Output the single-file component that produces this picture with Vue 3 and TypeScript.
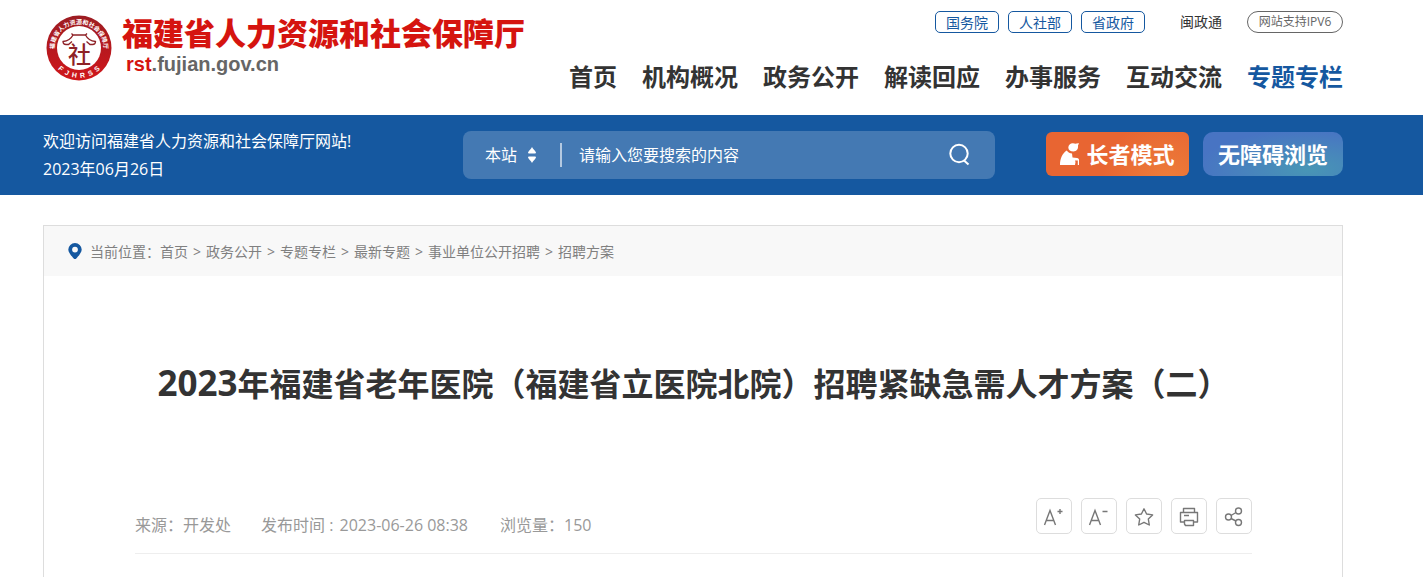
<script setup lang="ts">
import { ref } from 'vue'

const portals: string[] = ['国务院', '人社部', '省政府']
const nav: string[] = ['首页', '机构概况', '政务公开', '解读回应', '办事服务', '互动交流', '专题专栏']
const activeNav = '专题专栏'
const crumbs: string[] = ['首页', '政务公开', '专题专栏', '最新专题', '事业单位公开招聘', '招聘方案']
const scope = ref('本站')
const keyword = ref('')
</script>

<template>
  <div class="page">
    <header class="wrap header">
      <a class="brand" href="#">
        <svg class="emblem" viewBox="0 0 66 66" aria-hidden="true">
          <defs>
            <linearGradient id="ring" x1="0" y1="0" x2="0" y2="1">
              <stop offset="0" stop-color="#9c1c22" />
              <stop offset="1" stop-color="#d0161b" />
            </linearGradient>
            <path id="arc-top" d="M11.500 45.500A24.600 24.600 0 1 1 54.500 45.500" />
            <path id="arc-bottom" d="M4 40A29.800 29.800 0 0 0 62 40" />
          </defs>
          <circle cx="33" cy="33" r="32.500" fill="url(#ring)" />
          <circle cx="33" cy="33" r="22" fill="#fff" />
          <text class="ring-cn"><textPath href="#arc-top" startOffset="50%" text-anchor="middle">福建省人力资源和社会保障厅</textPath></text>
          <text class="ring-en"><textPath href="#arc-bottom" startOffset="50%" text-anchor="middle">F&nbsp;&nbsp;J&nbsp;&nbsp;H&nbsp;&nbsp;R&nbsp;&nbsp;S&nbsp;&nbsp;S</textPath></text>
          <g fill="none" stroke="#8e2227" stroke-width="1.300">
            <path d="M25.500 18.500L27 20H39.500L41 18.500" />
            <path d="M27 20C25 24 22 26 17 26.500C17 28.500 18 29.500 20 29.500H22.500L26 26.500" />
            <path d="M39.500 20C41.500 24 44.500 26 49.500 26.500C49.500 28.500 48.500 29.500 46.500 29.500H44L40.500 26.500" />
          </g>
          <text class="emblem-mark" x="33.500" y="48" text-anchor="middle">社</text>
        </svg>
        <span class="brand-text">
          <span class="brand-name">福建省人力资源和社会保障厅</span>
          <span class="brand-url"><b>rst</b>.fujian.gov.cn</span>
        </span>
      </a>
      <div class="header-right">
        <div class="tools">
          <a v-for="p in portals" :key="p" class="portal" href="#">{{ p }}</a>
          <a class="mzt" href="#">闽政通</a>
          <a class="ipv6" href="#">网站支持IPV6</a>
        </div>
        <nav class="nav">
          <a v-for="n in nav" :key="n" href="#" :class="{ active: n === activeNav }">{{ n }}</a>
        </nav>
      </div>
    </header>

    <section class="band">
      <div class="wrap band-inner">
        <p class="welcome">欢迎访问福建省人力资源和社会保障厅网站!<br />2023年06月26日</p>
        <form class="search" @submit.prevent>
          <div class="scope">
            <select v-model="scope" aria-label="搜索范围">
              <option>本站</option>
            </select>
            <svg width="10" height="18" viewBox="0 0 10 18" fill="#fff" aria-hidden="true">
              <path d="M5 1C6 3 8 4.500 9 6.500Q9 7.500 8 7.500H2Q1 7.500 1 6.500C2 4.500 4 3 5 1ZM5 17C6 15 8 13.500 9 11.500Q9 10.500 8 10.500H2Q1 10.500 1 11.500C2 13.500 4 15 5 17Z" />
            </svg>
          </div>
          <input v-model="keyword" type="text" placeholder="请输入您要搜索的内容" aria-label="搜索内容" />
          <button type="submit" aria-label="搜索">
            <svg width="24" height="24" viewBox="0 0 24 24" fill="none" stroke="#fff" stroke-width="2" aria-hidden="true">
              <circle cx="12" cy="10.500" r="8.700" /><path d="M17 17.500L21.500 21.500" />
            </svg>
          </button>
        </form>
        <div class="modes">
          <button class="mode elder" type="button">
            <svg width="20" height="24" viewBox="0 0 20 24" fill="#fff" aria-hidden="true">
              <path d="M8.300 6.500C8.500 3.500 11 1.800 14 2.500C16 3 17 2 19 2.300L18 4.500C18.500 8 16.500 10.300 13.500 10.500C10.500 10.500 8.300 9 8.300 6.500Z" />
              <path d="M6.800 9.500C8 11.500 10 12.500 12 12.500L12.500 16.500L17 17C18.500 17 19 18 19 19V24H17.800V19.500H15L15.500 21L15 24H0C0 17.500 2.500 12 6.800 9.500Z" />
            </svg>
            <span>长者模式</span>
          </button>
          <button class="mode barrier" type="button">无障碍浏览</button>
        </div>
      </div>
    </section>

    <main class="wrap main">
      <article class="sheet">
        <nav class="crumbs" aria-label="当前位置">
          <svg width="14" height="16" viewBox="0 0 14 16" aria-hidden="true">
            <path fill="#1558a0" fill-rule="evenodd" d="M7 0A6.700 6.700 0 0 1 13.700 6.600C13.700 10 9.500 14 8.300 15.400Q7 16.500 5.700 15.400C4.500 14 .3 10 .3 6.600A6.700 6.700 0 0 1 7 0ZM7 3.700A2.900 2.900 0 1 0 7 9.500A2.900 2.900 0 1 0 7 3.700Z" />
          </svg>
          <span>当前位置：</span>
          <template v-for="(c, i) in crumbs" :key="c">
            <span v-if="i > 0" class="sep">&gt;</span>
            <a href="#">{{ c }}</a>
          </template>
        </nav>
        <div class="body">
          <h1><span class="year">2023</span>年福建省老年医院（福建省立医院北院）招聘紧缺急需人才方案（二）</h1>
          <div class="meta">
            <div class="facts">
              <span>来源：开发处</span>
              <span>发布时间 : <time>2023-06-26 08:38</time></span>
              <span>浏览量：<b>150</b></span>
            </div>
            <div class="actions">
              <button type="button" aria-label="放大字号">
                <svg viewBox="0 0 34 34" aria-hidden="true"><path d="M7.500 26L13 11.500L18.500 26M9.500 21.500H16.500M20.500 12.500H25.500M23 10V15" /></svg>
              </button>
              <button type="button" aria-label="缩小字号">
                <svg viewBox="0 0 34 34" aria-hidden="true"><path d="M7.500 26L13 11.500L18.500 26M9.500 21.500H16.500M20.500 12.500H25.500" /></svg>
              </button>
              <button type="button" aria-label="收藏">
                <svg viewBox="0 0 34 34" aria-hidden="true"><path stroke-linejoin="round" d="M17 9.800L19.600 15L25.600 15.900L21.300 20L22.300 26L17 23.300L11.700 26L12.700 20L8.400 15.900L14.400 15Z" /></svg>
              </button>
              <button type="button" aria-label="打印">
                <svg viewBox="0 0 34 34" aria-hidden="true"><path stroke-linejoin="round" d="M11.500 13V9.500H22.500V13M12 23H8.500V13.500H25.500V23H22M12 16.500H17M12.500 21.500H21.500V26.500H13.500L12.500 25Z" /></svg>
              </button>
              <button type="button" aria-label="分享">
                <svg viewBox="0 0 34 34" aria-hidden="true"><circle cx="11.500" cy="18" r="3" /><circle cx="21.500" cy="12" r="3" /><circle cx="21.500" cy="23.500" r="3" /><path d="M14 16.500L19 13.500M14 19.500L19 22" /></svg>
              </button>
            </div>
          </div>
        </div>
      </article>
    </main>
  </div>
</template>

<style>
body {
  background: #fff;
}
</style>

<style scoped>
.page {
  display: flex;
  flex-direction: column;
  min-height: 100vh;
  color: #333;
  font-family: "Open Sans", "Noto Sans CJK SC", sans-serif;
  font-size: 16px;
}
.page * {
  box-sizing: border-box;
}
a {
  color: inherit;
  text-decoration: none;
}
button,
input,
select {
  margin: 0;
  padding: 0;
  border: 0;
  background: none;
  color: inherit;
  font: inherit;
}
svg {
  flex: none;
  display: block;
}
.wrap {
  padding: 0 80px 0 43px;
}
.header {
  display: flex;
  justify-content: space-between;
  height: 115px;
}
.brand {
  display: flex;
  gap: 10px;
  padding: 15px 0 0 3px;
}
.emblem {
  width: 66px;
  height: 66px;
}
.ring-cn {
  fill: #fff;
  font-size: 6px;
  font-weight: 700;
}
.ring-en {
  fill: #fff;
  font-family: "Liberation Sans", sans-serif;
  font-size: 7px;
  font-weight: 700;
}
.emblem-mark {
  fill: #8e2227;
  font-size: 23px;
  font-weight: 500;
}
.brand-text {
  display: flex;
  flex-direction: column;
  white-space: nowrap;
}
.brand-name {
  color: #d5140f;
  font-family: "Noto Sans CJK SC", sans-serif;
  font-size: 31px;
  font-weight: 900;
  line-height: 34px;
}
.brand-url {
  padding-left: 4px;
  color: #666;
  font: 700 20px/30px "Liberation Sans", sans-serif;
}
.brand-url b {
  color: #d5140f;
}
.header-right {
  display: flex;
  flex-direction: column;
  align-items: flex-end;
  white-space: nowrap;
}
.tools {
  display: flex;
  gap: 9px;
  padding-top: 11px;
  font-size: 14px;
  line-height: 22px;
}
.portal {
  width: 64px;
  height: 22px;
  border: 1px solid #1558a0;
  border-radius: 5px;
  color: #1558a0;
  text-align: center;
}
.mzt {
  margin: 0 16px 0 26px;
}
.ipv6 {
  width: 96px;
  height: 22px;
  border: 1px solid #666;
  border-radius: 11px;
  color: #666;
  font-size: 12px;
  line-height: 20px;
  text-align: center;
}
.nav {
  display: flex;
  gap: 25px;
  padding-top: 26px;
  font-size: 24px;
  font-weight: 700;
  line-height: 36px;
}
.nav .active {
  color: #1558a0;
}
.band {
  background: #1558a0;
  color: #fff;
}
.band-inner {
  display: flex;
  align-items: center;
  height: 80px;
}
.welcome {
  flex: 0 0 420px;
  margin: 0;
  line-height: 28px;
}
.search {
  display: flex;
  flex: 1;
  align-items: center;
  height: 48px;
  padding: 0 24px 0 22px;
  border-radius: 8px;
  background: #4479b3;
}
.scope {
  display: flex;
  align-items: center;
  gap: 8px;
  width: 77px;
  height: 24px;
  border-right: 2px solid #b4c9e1;
}
.scope select {
  appearance: none;
  width: 34px;
}
.search input {
  flex: 1;
  min-width: 0;
  padding-left: 17px;
  outline: 0;
}
.search input::placeholder {
  color: #fff;
  opacity: 1;
}
.modes {
  display: flex;
  gap: 14px;
  margin: 0 0 2px 51px;
}
.mode {
  display: flex;
  align-items: center;
  justify-content: center;
  height: 44px;
  padding-bottom: 2px;
  font-size: 22px;
  font-weight: 700;
  white-space: nowrap;
}
.elder {
  gap: 6px;
  width: 143px;
  border-radius: 6px;
  background: radial-gradient(circle at 85% 115%, #ed7e3a, #e86532 50%);
}
.barrier {
  width: 140px;
  border-radius: 10px;
  background: radial-gradient(ellipse at 75% 85%, #4896b5, #4874c3 75%);
}
.main {
  display: flex;
  flex: 1;
  padding-top: 30px;
}
.sheet {
  flex: 1;
  border: 1px solid #ddd;
  border-bottom: 0;
}
.crumbs {
  display: flex;
  align-items: center;
  height: 50px;
  padding-left: 24px;
  background: #f8f8f8;
  color: #808080;
  font-size: 14px;
}
.crumbs svg {
  margin-right: 8px;
}
.sep {
  width: 18px;
  text-align: center;
}
.body {
  padding: 0 90px 0 91px;
}
h1 {
  margin: 0;
  padding-top: 84px;
  font-size: 32px;
  line-height: 48px;
  text-align: center;
}
.year {
  font-size: 35px;
  line-height: 1;
}
.meta {
  display: flex;
  align-items: flex-start;
  justify-content: space-between;
  margin-top: 90px;
  padding-bottom: 19px;
  border-bottom: 1px solid #eee;
  color: #999;
}
.facts {
  display: flex;
  gap: 30px;
  height: 36px;
  padding-top: 14px;
  line-height: 26px;
}
.facts time,
.facts b {
  font-weight: 500;
}
.facts time {
  margin: 0 2px;
}
.actions {
  display: flex;
  gap: 9px;
}
.actions button {
  width: 36px;
  height: 36px;
  border: 1px solid #ddd;
  border-radius: 5px;
}
.actions svg {
  width: 34px;
  height: 34px;
  fill: none;
  stroke: #777;
  stroke-width: 1.4;
}
</style>
